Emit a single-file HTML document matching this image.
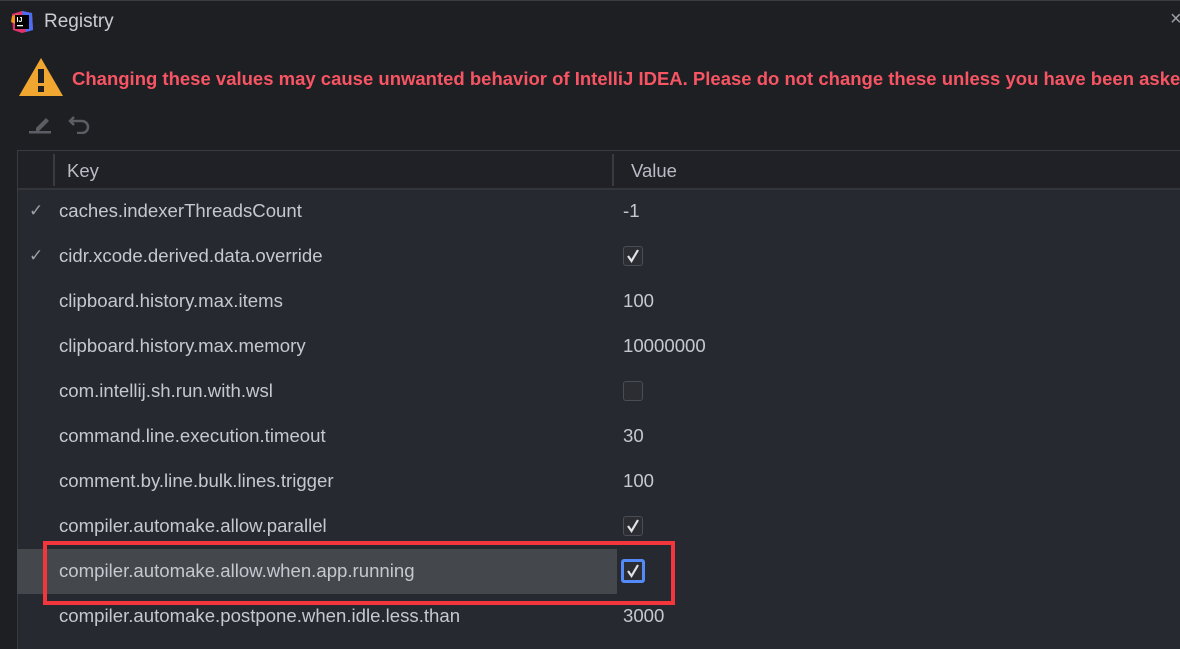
<!DOCTYPE html>
<html><head><style>
body{margin:0;width:1180px;height:648px;background:#1e1f22;overflow:hidden;font-family:"Liberation Sans",sans-serif;position:relative}
.a{position:absolute}
.t{color:#c9ccd3;font-size:19px}
.row{position:absolute;left:17px;width:1163px;height:45px}
.k{position:absolute;left:42px;top:11px;color:#c5c8ce;font-size:18.6px}
.v{position:absolute;left:606px;top:11px;color:#c5c8ce;font-size:18.6px}
.cb{position:absolute;left:606px;top:12px;width:18px;height:18px;border:1.5px solid #4a4d55;border-radius:3px;background:#2b2d33}
.cb svg{position:absolute;left:1px;top:1px}
.tick{position:absolute;left:12px;top:12px;color:#9da0a8;font-size:17px}
</style></head><body>
<div class="a" style="left:0;top:0;width:1180px;height:1px;background:#3a3c42"></div>
<svg class="a" style="left:10px;top:10px" width="24" height="24" viewBox="0 0 24 24">
<polygon points="2,4 12,1 22,3 23,20 12,23 3,20" fill="#e0336e"/>
<polygon points="12,1 22,3 23,20 16,22" fill="#4b6ef5"/>
<polygon points="2,6 8,4 6,14 1,12" fill="#f7931e"/>
<rect x="5" y="5" width="14" height="14" fill="#000"/>
<text x="6.5" y="12" fill="#fff" font-size="7" font-weight="bold" font-family="Liberation Sans">IJ</text>
<rect x="7" y="15" width="6" height="1.3" fill="#fff"/>
</svg>
<div class="a t" style="left:44px;top:11px">Registry</div>
<div class="a" style="left:1170px;top:8px;color:#9da0a8;font-size:20px">×</div>
<svg class="a" style="left:18px;top:57px" width="46" height="40" viewBox="0 0 46 40"><polygon points="23,1 45,39 1,39" fill="#f0a732"/><rect x="20" y="12" width="6" height="14" fill="#1e1f22"/><rect x="20" y="29" width="6" height="6" fill="#1e1f22"/></svg>
<div class="a" style="left:72px;top:68px;color:#f75464;font-weight:bold;font-size:18.5px;white-space:nowrap">Changing these values may cause unwanted behavior of IntelliJ IDEA. Please do not change these unless you have been asked</div>
<svg class="a" style="left:28px;top:112px" width="24" height="22" viewBox="0 0 24 22"><path d="M8 16 L18 6 L21 9 L11 19 L8 19 Z" fill="#5a5d63"/><rect x="1" y="19" width="22" height="2.5" fill="#5a5d63"/></svg>
<svg class="a" style="left:68px;top:112px" width="24" height="22" viewBox="0 0 24 22"><path d="M6 5 L2 9 L6 13 M2 9 H14 A6 6 0 0 1 14 21 H9" fill="none" stroke="#5a5d63" stroke-width="2.5"/></svg>
<div class="a" style="left:17px;top:150px;width:1163px;height:498px;background:#262930;border-top:1px solid #393b40;border-left:1px solid #393b40"></div>
<div class="a" style="left:18px;top:151px;width:1162px;height:37px;background:#1f2127;border-bottom:2px solid #33353b"></div>
<div class="a" style="left:53px;top:154px;width:2px;height:32px;background:#393b40"></div>
<div class="a" style="left:612px;top:154px;width:2px;height:32px;background:#393b40"></div>
<div class="a" style="left:67px;top:160px;color:#b9bcc3;font-size:18.5px">Key</div>
<div class="a" style="left:631px;top:160px;color:#b9bcc3;font-size:18.5px">Value</div>

<div class="row" style="top:189px"><span class="tick">✓</span><span class="k">caches.indexerThreadsCount</span><span class="v">-1</span></div>
<div class="row" style="top:234px"><span class="tick">✓</span><span class="k">cidr.xcode.derived.data.override</span><span class="cb"><svg width="16" height="16"><path d="M3 8 L6.5 13 L13 2" fill="none" stroke="#dfe1e5" stroke-width="2.2"/></svg></span></div>
<div class="row" style="top:279px"><span class="k">clipboard.history.max.items</span><span class="v">100</span></div>
<div class="row" style="top:324px"><span class="k">clipboard.history.max.memory</span><span class="v">10000000</span></div>
<div class="row" style="top:369px"><span class="k">com.intellij.sh.run.with.wsl</span><span class="cb"></span></div>
<div class="row" style="top:414px"><span class="k">command.line.execution.timeout</span><span class="v">30</span></div>
<div class="row" style="top:459px"><span class="k">comment.by.line.bulk.lines.trigger</span><span class="v">100</span></div>
<div class="row" style="top:504px"><span class="k">compiler.automake.allow.parallel</span><span class="cb"><svg width="16" height="16"><path d="M3 8 L6.5 13 L13 2" fill="none" stroke="#dfe1e5" stroke-width="2.2"/></svg></span></div>
<div class="row" style="top:549px"><div class="a" style="left:0;top:0;width:600px;height:45px;background:#44474c"></div><span class="k">compiler.automake.allow.when.app.running</span><span class="cb" style="border:3px solid #548af7;top:10px;left:604px;background:#2b2d33"><svg width="16" height="16"><path d="M3 8 L6.5 13 L13 2" fill="none" stroke="#dfe1e5" stroke-width="2.2"/></svg></span></div>
<div class="row" style="top:594px"><span class="k">compiler.automake.postpone.when.idle.less.than</span><span class="v">3000</span></div>
<div class="a" style="left:43px;top:541px;width:624px;height:56px;border:4px solid #f2363c"></div>
</body></html>
